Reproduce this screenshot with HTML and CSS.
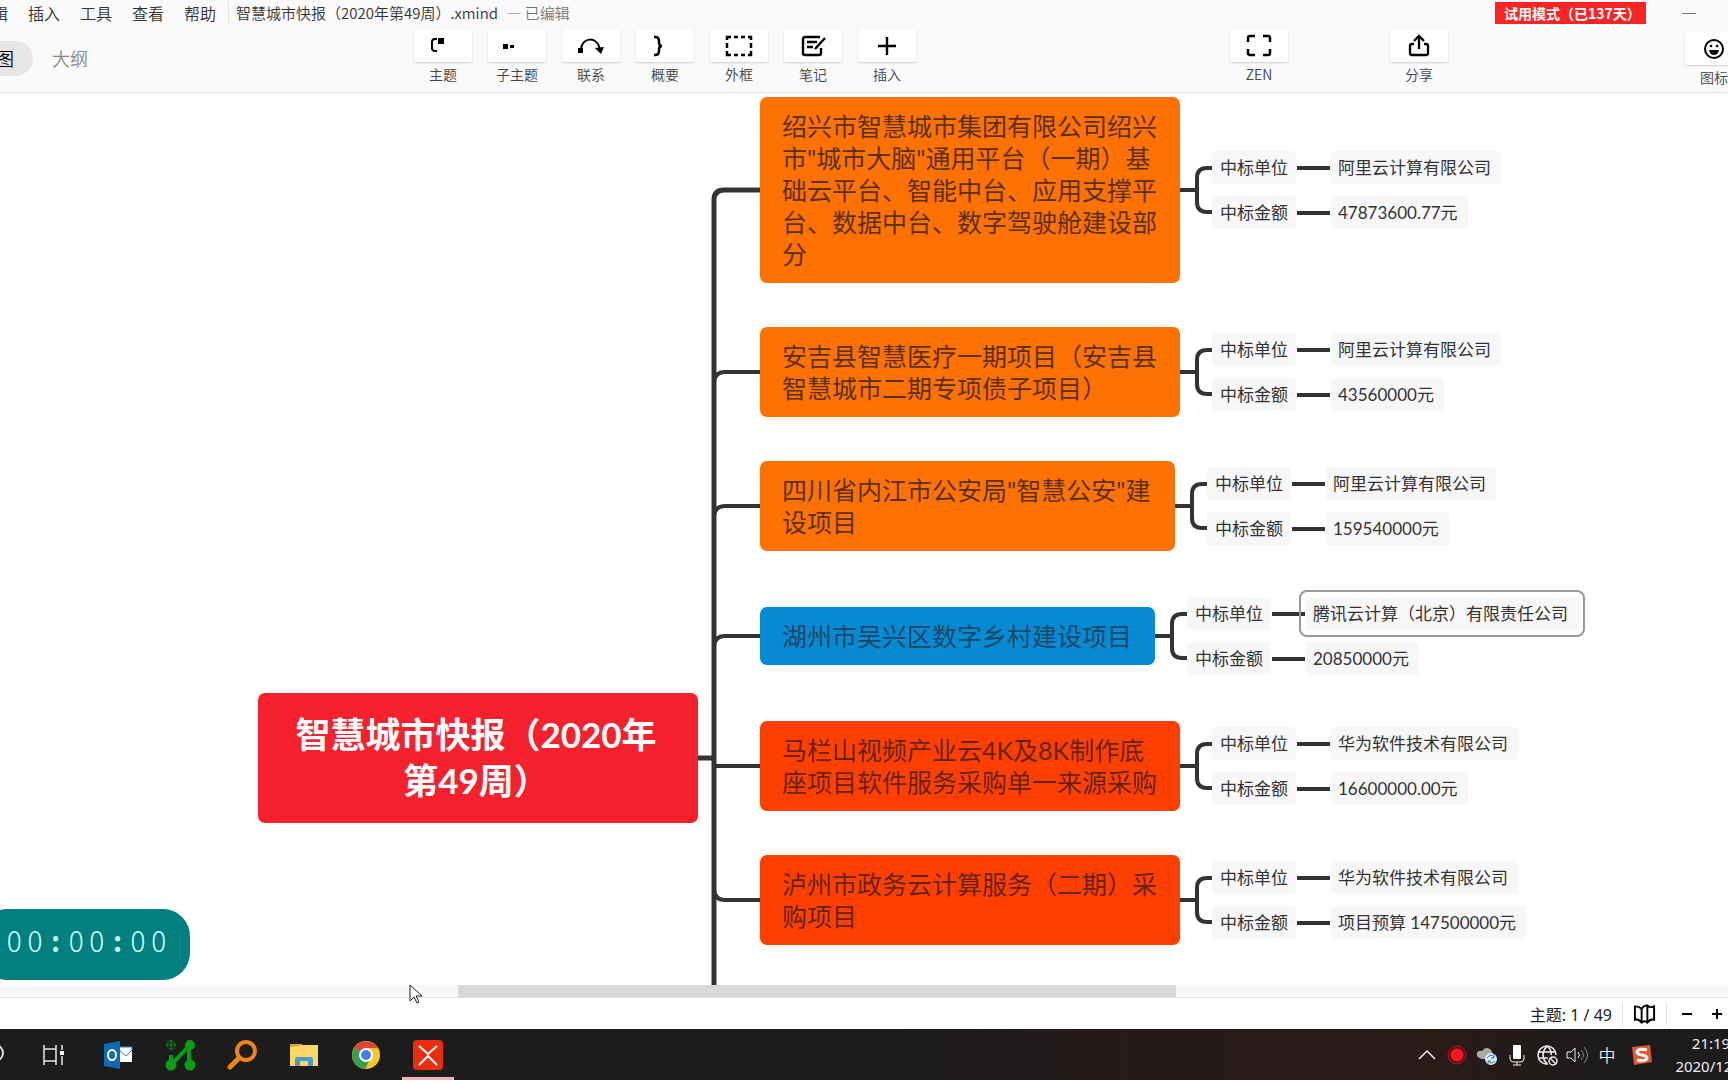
FILE: index.html
```html
<!DOCTYPE html>
<html lang="zh-CN">
<head>
<meta charset="utf-8">
<title>智慧城市快报（2020年第49周）.xmind</title>
<link rel="stylesheet" href="styles.css">
</head>
<body>
<div class="screen">
  <header class="header">
    <div class="titlebar">
      <nav class="menu">
        <button class="menu-item">编辑</button>
        <button class="menu-item">插入</button>
        <button class="menu-item">工具</button>
        <button class="menu-item">查看</button>
        <button class="menu-item">帮助</button>
      </nav>
      <div class="doc-title">智慧城市快报（2020年第49周）.xmind <span class="doc-state">— 已编辑</span></div>
      <div class="trial">试用模式（已137天）</div>
      <button class="minimize" aria-label="最小化"></button>
    </div>
    <div class="toolbar">
      <div class="tabs">
        <button class="tab tab-active">思维导图</button>
        <button class="tab">大纲</button>
      </div>
      <div class="tools">
        <button class="tool"><span class="tool-face"><svg class="icon" viewBox="0 0 28 28"><path d="M8 7H6q-3 0-3 3v6q0 3 3 3h2" fill="none" stroke="#000" stroke-width="2"/><path d="M9 6h6v6H9z"/></svg></span>主题</button>
        <button class="tool"><span class="tool-face"><svg class="icon" viewBox="0 0 28 28"><path d="M0 12h5v5H0zM7 13h4v3H7z"/></svg></span>子主题</button>
        <button class="tool"><span class="tool-face"><svg class="icon" viewBox="0 0 28 28"><path d="M4 17C5 5 20 4 23 17" fill="none" stroke="#000" stroke-width="2"/><path d="M1 16h5v5H1zM18 16l9-1-3 7z"/></svg></span>联系</button>
        <button class="tool"><span class="tool-face"><svg class="icon" viewBox="0 0 28 28"><path d="M3 5h1q4 0 4 4v2q0 3 3 3-3 0-3 3v2q0 4-4 4H3" fill="none" stroke="#000" stroke-width="2.5"/></svg></span>概要</button>
        <button class="tool"><span class="tool-face"><svg class="icon" viewBox="0 0 28 28"><path d="M2 8V5h4M9 5h4m3 0h4m3 0h3v3M2 11v5m24-5v5M2 19v4h4m3 0h4m3 0h4m3 0h3v-4" fill="none" stroke="#000" stroke-width="2.5"/></svg></span>外框</button>
        <button class="tool"><span class="tool-face"><svg class="icon" viewBox="0 0 28 28"><path d="M21 5H6Q4 5 4 7v14q0 2 2 2h14q2 0 2-2v-5M8 10h10M8 15h6M26 6L16 17" fill="none" stroke="#000" stroke-width="2.4"/></svg></span>笔记</button>
        <button class="tool"><span class="tool-face"><svg class="icon" viewBox="0 0 28 28"><path d="M14 5v18M5 14h18" fill="none" stroke="#000" stroke-width="2.4"/></svg></span>插入</button>
      </div>
      <div class="actions">
        <button class="tool"><span class="tool-face"><svg class="icon" viewBox="0 0 28 28"><path d="M10 4H5q-2 0-2 2v4M18 4h5q2 0 2 2v4M3 17v4q0 2 2 2h5M25 17v4q0 2-2 2h-5" fill="none" stroke="#000" stroke-width="2.5"/></svg></span>ZEN</button>
        <button class="tool"><span class="tool-face"><svg class="icon" viewBox="0 0 28 28"><path d="M9 12H7q-2 0-2 2v7q0 2 2 2h14q2 0 2-2v-7q0-2-2-2h-2M14 17V4M9 9l5-5 5 5" fill="none" stroke="#000" stroke-width="2.3"/></svg></span>分享</button>
      </div>
      <button class="tool tool-panel"><span class="tool-face"><svg class="icon" viewBox="0 0 28 28"><circle cx="14" cy="14" r="9" fill="none" stroke="#000" stroke-width="2"/><circle cx="11" cy="11" r="1.3"/><circle cx="17" cy="11" r="1.3"/><path d="M9 15h10q-1 5-5 5t-5-5z"/></svg></span>图标</button>
    </div>
  </header>

  <main class="map">
    <svg class="trunk" width="64" height="1200" viewBox="0 0 64 1200">
      <g fill="none" stroke="#333">
        <path d="M16 1200V107Q16 97 26 97H62" stroke-width="5"/>
        <path d="M0 665H16" stroke-width="5"/>
        <path d="M16 289Q17 279 27 279H62M16 423Q17 413 27 413H62M16 553Q17 543 27 543H62M16 673H62M16 797Q17 807 27 807H62" stroke-width="4"/>
      </g>
    </svg>
    <h1 class="root">智慧城市快报（2020年第49周）</h1>
    <div class="branches">
      <section class="branch">
        <div class="topic orange">绍兴市智慧城市集团有限公司绍兴市"城市大脑"通用平台（一期）基础云平台、智能中台、应用支撑平台、数据中台、数字驾驶舱建设部分</div>
        <svg class="fork" viewBox="0 0 32 50"><path d="M0 25H16M32 3H27Q17 3 17 13V37Q17 47 27 47H32"/></svg>
        <div class="leaves">
          <div class="leaf"><span class="chip">中标单位</span><i class="link"></i><span class="chip">阿里云计算有限公司</span></div>
          <div class="leaf"><span class="chip">中标金额</span><i class="link"></i><span class="chip">47873600.77元</span></div>
        </div>
      </section>
      <section class="branch">
        <div class="topic orange">安吉县智慧医疗一期项目（安吉县智慧城市二期专项债子项目）</div>
        <svg class="fork" viewBox="0 0 32 50"><path d="M0 25H16M32 3H27Q17 3 17 13V37Q17 47 27 47H32"/></svg>
        <div class="leaves">
          <div class="leaf"><span class="chip">中标单位</span><i class="link"></i><span class="chip">阿里云计算有限公司</span></div>
          <div class="leaf"><span class="chip">中标金额</span><i class="link"></i><span class="chip">43560000元</span></div>
        </div>
      </section>
      <section class="branch">
        <div class="topic orange medium">四川省内江市公安局"智慧公安"建设项目</div>
        <svg class="fork" viewBox="0 0 32 50"><path d="M0 25H16M32 3H27Q17 3 17 13V37Q17 47 27 47H32"/></svg>
        <div class="leaves">
          <div class="leaf"><span class="chip">中标单位</span><i class="link"></i><span class="chip">阿里云计算有限公司</span></div>
          <div class="leaf"><span class="chip">中标金额</span><i class="link"></i><span class="chip">159540000元</span></div>
        </div>
      </section>
      <section class="branch">
        <div class="topic blue">湖州市吴兴区数字乡村建设项目</div>
        <svg class="fork" viewBox="0 0 32 50"><path d="M0 25H16M32 3H27Q17 3 17 13V37Q17 47 27 47H32"/></svg>
        <div class="leaves">
          <div class="leaf"><span class="chip">中标单位</span><i class="link"></i><span class="chip selected">腾讯云计算（北京）有限责任公司</span></div>
          <div class="leaf"><span class="chip">中标金额</span><i class="link"></i><span class="chip">20850000元</span></div>
        </div>
      </section>
      <section class="branch">
        <div class="topic red">马栏山视频产业云4K及8K制作底座项目软件服务采购单一来源采购</div>
        <svg class="fork" viewBox="0 0 32 50"><path d="M0 25H16M32 3H27Q17 3 17 13V37Q17 47 27 47H32"/></svg>
        <div class="leaves">
          <div class="leaf"><span class="chip">中标单位</span><i class="link"></i><span class="chip">华为软件技术有限公司</span></div>
          <div class="leaf"><span class="chip">中标金额</span><i class="link"></i><span class="chip">16600000.00元</span></div>
        </div>
      </section>
      <section class="branch">
        <div class="topic red">泸州市政务云计算服务（二期）采购项目</div>
        <svg class="fork" viewBox="0 0 32 50"><path d="M0 25H16M32 3H27Q17 3 17 13V37Q17 47 27 47H32"/></svg>
        <div class="leaves">
          <div class="leaf"><span class="chip">中标单位</span><i class="link"></i><span class="chip">华为软件技术有限公司</span></div>
          <div class="leaf"><span class="chip">中标金额</span><i class="link"></i><span class="chip">项目预算 147500000元</span></div>
        </div>
      </section>
    </div>
    <div class="timer"><span>0</span><span>0</span><b>:</b><span>0</span><span>0</span><b>:</b><span>0</span><span>0</span></div>
  </main>

  <div class="scrollbar"><div class="thumb"></div>
    <svg class="cursor" viewBox="0 0 14 20"><path d="M1 1v16l4-4 3 6 2-1-3-6h6z" fill="#fff" stroke="#222"/></svg>
  </div>

  <footer class="status">
    <span class="count">主题: 1 / 49</span>
    <button class="status-map" aria-label="导航"><svg viewBox="0 0 24 22"><path d="M2 3q5 0 7 3 2-4 6-4 2 3 7 1v14q-4-1-7 3-3-3-6 0-3-4-7-3zM9 6v14M15 2v18" fill="none" stroke="#000" stroke-width="2"/></svg></button>
    <button class="zoom-btn" aria-label="缩小"><svg viewBox="0 0 12 12"><path d="M1 6h10" stroke="#000" stroke-width="2"/></svg></button>
    <button class="zoom-btn" aria-label="放大"><svg viewBox="0 0 12 12"><path d="M1 6h10M6 1v10" stroke="#000" stroke-width="2"/></svg></button>
  </footer>

  <div class="taskbar">
    <div class="apps">
      <button class="app" aria-label="搜索"><svg viewBox="0 0 32 32"><circle cx="17" cy="14" r="8" fill="none" stroke="#ddd" stroke-width="2"/></svg></button>
      <button class="app" aria-label="任务视图"><svg viewBox="0 0 32 32"><path d="M4 6v4h12V6M4 26v-4h12v4M4 10v12M16 10v12M22 6v5m0 6v9" fill="none" stroke="#e8e8e8" stroke-width="1.5"/><path d="M20 12h4v4h-4z" fill="#fff"/></svg></button>
      <button class="app" aria-label="Outlook"><svg viewBox="0 0 32 32"><path d="M17 8h13v15H17z" fill="#fff"/><path d="M17 8h13v3l-6 6-7-6z" fill="#fff" stroke="#2a7cc7"/><path d="M2 5l16-3v28L2 27z" fill="#0f69b8"/><ellipse cx="10" cy="16" rx="4" ry="5" fill="none" stroke="#fff" stroke-width="2"/></svg></button>
      <button class="app" aria-label="网络工具"><svg viewBox="0 0 32 32"><path d="M7 26V16M7 26L25 7V26" fill="none" stroke="#0a9c14" stroke-width="4"/><g fill="#0a9c14"><circle cx="7" cy="26" r="5.5"/><circle cx="26" cy="26" r="5.5"/><circle cx="26" cy="6" r="5"/></g><circle cx="7" cy="6" r="5" fill="#0a7c12"/><path d="M2 4h10M2 8h10M5 1v10M9 1v10" stroke="#1c1c1c"/></svg></button>
      <button class="app" aria-label="查找"><svg viewBox="0 0 32 32"><circle cx="20" cy="12" r="9" fill="none" stroke="#f08418" stroke-width="4"/><path d="M13 19l-9 9" stroke="#f08418" stroke-width="5" stroke-linecap="round"/></svg></button>
      <button class="app" aria-label="文件夹"><svg viewBox="0 0 32 32"><path d="M2 5h12l2 3H2z" fill="#d9a02c"/><path d="M2 8l14-2h14v21H2z" fill="#fbd766"/><path d="M7 27v-7q0-2 2-2h14q2 0 2 2v7h-5v-5h-8v5z" fill="#4d9dcc"/></svg></button>
      <button class="app" aria-label="Chrome"><svg viewBox="0 0 32 32"><circle cx="16" cy="16" r="14" fill="#fbc629"/><path d="M16 16L4 9a14 14 0 0 1 24 0H16z" fill="#e0453a"/><path d="M16 16L4 9a14 14 0 0 0 11 21l6-11z" fill="#34a04c"/><circle cx="16" cy="16" r="7" fill="#fff"/><circle cx="16" cy="16" r="5" fill="#4382ea"/></svg></button>
      <button class="app app-active" aria-label="XMind"><svg viewBox="0 0 32 32"><rect x="1" y="1" width="30" height="30" rx="4" fill="#ea2e0c"/><path d="M7 7l9 8 9-8M7 26l9-9 9 9" fill="none" stroke="#fff" stroke-width="2"/></svg></button>
    </div>
    <div class="tray">
      <svg class="tray-icon" viewBox="0 0 24 24"><path d="M4 16l8-8 8 8" fill="none" stroke="#eee" stroke-width="1.5"/></svg>
      <svg class="tray-icon" viewBox="0 0 24 24"><circle cx="12" cy="12" r="9" fill="#5c0f10" stroke="#b4161a" stroke-width="1"/><circle cx="12" cy="12" r="6.5" fill="#f01a22"/></svg>
      <svg class="tray-icon" viewBox="0 0 24 24"><path d="M5 15q-4-1-3-5 1-3 5-2 3-5 8-2 3 3 2 6v4H6z" fill="#aaa"/><circle cx="16" cy="16" r="6" fill="#dcecf8"/><path d="M12 15q4-5 7-1m1 4q-4 4-7 0M19 11v4h-3M13 21v-3h3" fill="none" stroke="#2774b8"/></svg>
      <svg class="tray-icon" viewBox="0 0 24 24"><rect x="8" y="2" width="8" height="14" rx="1" fill="#fff"/><path d="M5 12v4q0 3 4 3h6q4 0 4-3v-4M12 19v3M8 22h8" fill="none" stroke="#eee"/></svg>
      <svg class="tray-icon" viewBox="0 0 24 24"><g fill="none" stroke="#eee" stroke-width="1.5"><path d="M13 21A9 9 0 1 1 21 12M3 9h17M3 15h10M12 3q-8 9 0 18M12 3q5 4 4 9"/><circle cx="18" cy="18" r="4"/><path d="M15 15l6 6"/></g></svg>
      <svg class="tray-icon" viewBox="0 0 24 24"><path d="M2 9h4l4-4v14l-4-4H2z" fill="none" stroke="#eee"/><path d="M13 9q3 3 0 6" fill="none" stroke="#eee"/><path d="M16 7q5 5 0 10M19 4q7 8 0 16" fill="none" stroke="#888"/></svg>
      <span class="ime">中</span>
      <svg class="tray-icon sogou" viewBox="0 0 24 24"><path d="M2 4l18-2 2 17-18 3z" fill="#e0572d"/><path d="M17 7q-9-2-10 2c0 4 10 2 10 6q-1 4-10 2" fill="none" stroke="#fff" stroke-width="3"/></svg>
      <div class="clock"><span>21:19</span><span>2020/12/6</span></div>
    </div>
  </div>
</div>
</body>
</html>
```
FILE: styles.css
```css
* { box-sizing: border-box; }

body {
  margin: 0;
  overflow: hidden;
  background: #fff;
  color: #333;
  font-family: "Noto Sans CJK SC", sans-serif;
  font-weight: 350;
}

button {
  margin: 0;
  padding: 0;
  border: 0;
  background: none;
  color: inherit;
  font: inherit;
  white-space: nowrap;
}

svg { display: block; }

.screen {
  display: flex;
  flex-direction: column;
  height: 100vh;
  overflow: hidden;
}

/* Header */
.header {
  flex: none;
  background: #fafafa;
  border-bottom: 1px solid #e2e2e2;
}

.titlebar {
  display: flex;
  align-items: center;
  height: 28px;
  padding-bottom: 2px;
  line-height: 24px;
}

.menu {
  display: flex;
  gap: 20px;
  margin-left: -24px;
  padding-right: 12px;
  border-right: 1px solid #e4e4e4;
  font-size: 16px;
}

.doc-title {
  margin-left: 7px;
  font-size: 15px;
  white-space: nowrap;
}

.doc-state {
  margin-left: 5px;
  color: #777;
}

.trial {
  width: 151px;
  height: 22px;
  margin-left: auto;
  padding-left: 9px;
  background: #fb2424;
  color: #fff;
  font-size: 14px;
  font-weight: 700;
  line-height: 22px;
  white-space: nowrap;
}

.minimize {
  width: 14px;
  height: 1px;
  margin: 0 32px 0 36px;
  background: #777;
}

.toolbar {
  display: flex;
  align-items: flex-start;
  height: 64px;
}

.tabs {
  display: flex;
  flex: none;
  width: 414px;
  margin-top: 13px;
  font-size: 18px;
  line-height: 35px;
  color: #888;
}

.tab { padding: 0 19px; }

.tab-active {
  margin-left: -77px;
  border-radius: 18px;
  background: #e6e6e6;
  color: #000;
}

.tools {
  display: flex;
  gap: 16px;
}

.tool {
  display: flex;
  flex: none;
  flex-direction: column;
  align-items: center;
  width: 58px;
  padding-top: 1px;
  color: #444;
  font-size: 14px;
  line-height: 24px;
}

.tool-face {
  display: flex;
  align-items: center;
  justify-content: center;
  width: 58px;
  height: 33px;
  border-radius: 2px;
  background: #fff;
  box-shadow: 0 1px 2px #ccc;
}

.icon {
  width: 28px;
  height: 28px;
}

.actions {
  display: flex;
  gap: 102px;
  margin-left: auto;
}

.tool-panel {
  margin: 3px -15px 0 237px;
}

/* Mind map canvas */
.map {
  position: relative;
  display: flex;
  flex: 1;
  align-items: flex-start;
  min-height: 0;
  padding-left: 258px;
  overflow: hidden;
  border-top: 1px solid #fff;
  font-family: Lato, "Noto Sans CJK SC", sans-serif;
  font-weight: 400;
}

.trunk {
  position: absolute;
  top: -1px;
  left: 698px;
}

.root {
  flex: none;
  width: 440px;
  margin: 599px 0 0;
  padding: 18px 36px 20px 32px;
  border-radius: 7px;
  background: #f7212d;
  color: #fff;
  font-size: 35px;
  font-weight: 700;
  line-height: 46px;
  text-align: center;
}

.branches {
  display: flex;
  flex-direction: column;
  gap: 44px;
  margin: 3px 0 0 62px;
}

.branch {
  display: flex;
  flex: none;
  align-items: center;
  min-height: 82px;
}

.topic {
  width: 420px;
  padding: 13px 20px 13px 22px;
  border-radius: 7px;
  font-size: 25px;
  line-height: 32px;
}

.topic.medium { width: 415px; }

.topic.orange {
  background: #ff7100;
  color: #5a3016;
}

.topic.red {
  background: #ff3f00;
  color: #652315;
}

.topic.blue {
  width: 395px;
  background: #058ad3;
  color: #1d4866;
}

.fork {
  width: 32px;
  height: 50px;
  fill: none;
  stroke: #333;
  stroke-width: 4;
}

.leaves {
  display: flex;
  flex-direction: column;
  gap: 12px;
}

.leaf {
  display: flex;
  align-items: center;
}

.chip {
  padding: 0 8px;
  border-radius: 3px;
  background: #f7f7f7;
  font-size: 17px;
  line-height: 33px;
  white-space: nowrap;
}

.link + .chip { padding: 0 10px 0 7px; }

.chip.selected {
  outline: 2px solid #999;
  outline-offset: 5px;
  border-radius: 1px;
}

.link {
  width: 33px;
  height: 4px;
  margin: 0 1px;
  background: #333;
}

.timer {
  position: absolute;
  bottom: 5px;
  left: -20px;
  display: grid;
  grid-template-columns: repeat(8, 1fr);
  width: 210px;
  height: 71px;
  padding: 0 21px 8px 24px;
  border-radius: 27px;
  background: #028080;
  color: #c8ffff;
  font-family: "Noto Sans CJK SC", sans-serif;
  font-size: 28px;
  font-weight: 300;
  line-height: 62px;
  text-align: center;
}

.timer b { font-weight: 700; }

/* Horizontal scrollbar */
.scrollbar {
  position: relative;
  flex: none;
  height: 13px;
  background: #f8f8f8;
  border-bottom: 1px solid #e0e0e0;
}

.thumb {
  width: 718px;
  height: 12px;
  margin-left: 458px;
  background: #d9d9d9;
}

.cursor {
  position: absolute;
  top: -1px;
  left: 409px;
  width: 14px;
  height: 20px;
}

/* Status bar */
.status {
  display: flex;
  flex: none;
  align-items: center;
  justify-content: flex-end;
  height: 31px;
  padding-right: 5px;
  color: #222;
  font-family: "Noto Sans", "Noto Sans CJK SC", sans-serif;
  font-size: 16px;
  font-weight: 400;
}

.count { margin-right: 10px; }

.status-map {
  width: 45px;
  padding: 0 10px;
  border: solid #e4e4e4;
  border-width: 0 1px;
}

.status-map svg {
  width: 23px;
  height: 24px;
}

.zoom-btn {
  width: 12px;
  margin-left: 14px;
}

.zoom-btn + .zoom-btn { margin-left: 18px; }

/* Desktop taskbar */
.taskbar {
  display: flex;
  flex: none;
  justify-content: space-between;
  height: 51px;
  background: linear-gradient(90deg, #1c1c1c 0%, #1c1c1c 50%, #2a1918 78%, #2b1a18 82%, #1c1b1a 92%, #1c1c1c 100%);
  color: #eee;
}

.apps {
  display: flex;
  margin-left: -37px;
}

.app {
  display: flex;
  align-items: center;
  justify-content: center;
  width: 62px;
  height: 51px;
}

.app svg {
  width: 32px;
  height: 32px;
}

.app-active {
  width: 52px;
  margin-left: 5px;
  border-bottom: 3px solid #f3b4b9;
  padding-top: 3px;
}

.tray {
  display: flex;
  align-items: center;
  gap: 6px;
  margin-right: -20px;
}

.tray-icon {
  width: 24px;
  height: 24px;
}

.ime {
  width: 24px;
  font-size: 17px;
  text-align: center;
}

.sogou { margin-left: 5px; }

.clock {
  display: flex;
  flex-direction: column;
  align-items: center;
  width: 74px;
  margin-left: 14px;
  font-family: "Noto Sans", sans-serif;
  font-size: 15px;
  font-weight: 400;
  line-height: 23px;
}
```
